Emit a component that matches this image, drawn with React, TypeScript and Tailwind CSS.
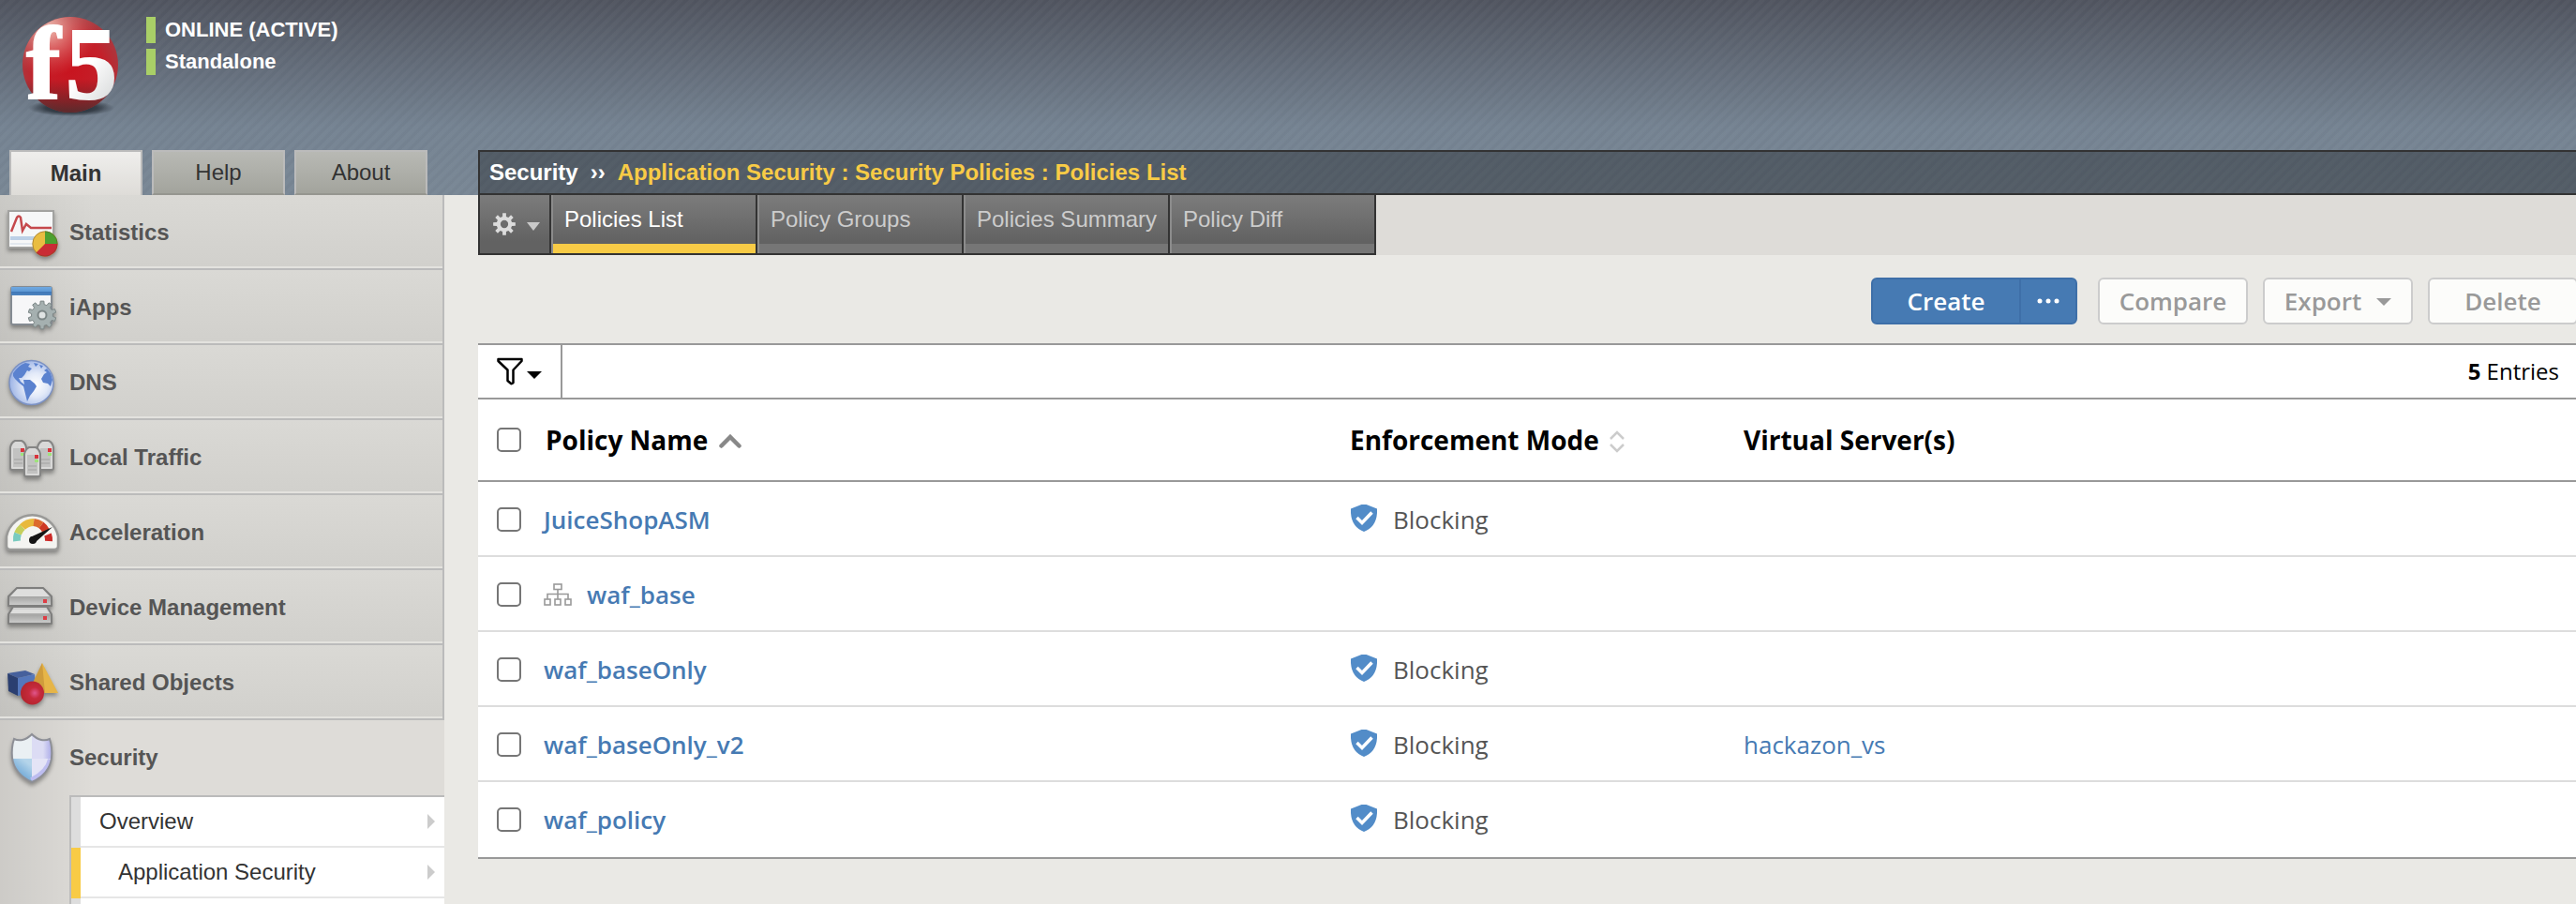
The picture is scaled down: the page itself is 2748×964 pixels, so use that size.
import React from "react";

const OPEN = "font-['Open_Sans','Noto_Sans',sans-serif]";

function Logo() {
  return (
    <svg width="120" height="140" viewBox="20 0 120 140" role="img" aria-label="f5">
      <defs>
        <radialGradient id="ball" cx="0.5" cy="0.55" r="0.55">
          <stop offset="0" stopColor="#c8141f" />
          <stop offset="0.65" stopColor="#c4202a" />
          <stop offset="1" stopColor="#a83a40" />
        </radialGradient>
        <radialGradient id="shine" cx="0.28" cy="0.12" r="0.5">
          <stop offset="0" stopColor="#f3c4b8" stopOpacity="0.95" />
          <stop offset="1" stopColor="#e06060" stopOpacity="0" />
        </radialGradient>
        <linearGradient id="dark" x1="0" y1="0" x2="0" y2="1">
          <stop offset="0.65" stopColor="#402020" stopOpacity="0" />
          <stop offset="1" stopColor="#3c2a2a" stopOpacity="0.75" />
        </linearGradient>
        <radialGradient id="ground">
          <stop offset="0" stopColor="#1c232b" stopOpacity="0.95" />
          <stop offset="0.6" stopColor="#1c232b" stopOpacity="0.7" />
          <stop offset="1" stopColor="#1c232b" stopOpacity="0" />
        </radialGradient>
        <linearGradient id="letters" x1="0" y1="0" x2="1" y2="1">
          <stop offset="0.6" stopColor="#ffffff" />
          <stop offset="1" stopColor="#c9cccd" />
        </linearGradient>
      </defs>
      <ellipse cx="76" cy="115" rx="46" ry="9" fill="url(#ground)" />
      <circle cx="75" cy="69" r="51" fill="url(#ball)" />
      <circle cx="75" cy="69" r="51" fill="url(#shine)" />
      <circle cx="75" cy="69" r="51" fill="url(#dark)" />
      <text
        x="28 70"
        y="105"
        fontSize="110"
        fontWeight="700"
        fill="url(#letters)"
        stroke="url(#letters)"
        strokeWidth="2"
        className="font-['Liberation_Serif',serif]"
      >
        f5
      </text>
    </svg>
  );
}

const shadow = "drop-shadow-[0_3px_2px_rgba(0,0,0,0.35)]";

function StatisticsIcon() {
  return (
    <svg width="64" height="60" viewBox="0 0 64 60" className={shadow} aria-hidden="true">
      <rect x="9" y="7" width="48" height="39" fill="#f6f7f8" stroke="#a2a2a0" strokeWidth="2" />
      <rect x="11" y="34" width="32" height="4" fill="#bcd0e6" />
      <rect x="11" y="41" width="32" height="2" fill="#e2e8ef" />
      <path d="M12 29 L18 14 Q20 11 22 14 L24 28 L28 21 L33 25 L55 25" fill="none" stroke="#c5494d" strokeWidth="2.5" />
      <circle cx="48" cy="42" r="13.5" fill="#e9bd42" />
      <path d="M48 42 V28.5 A13.5 13.5 0 0 1 61.500 42 Z" fill="#4da030" />
      <path d="M48 42 H61.500 A13.5 13.5 0 0 1 38.500 51.500 Z" fill="#c92c35" />
      <circle cx="48" cy="42" r="13.200" fill="none" stroke="#6b4a2a" strokeOpacity="0.45" />
    </svg>
  );
}

function gearPath(cx: number, cy: number, outer: number, inner: number, teeth: number) {
  const pts: string[] = [];
  const step = (Math.PI * 2) / teeth;
  for (let i = 0; i < teeth; i++) {
    const a = i * step - Math.PI / 2;
    const corners: [number, number][] = [
      [a - step * 0.3, inner],
      [a - step * 0.2, outer],
      [a + step * 0.2, outer],
      [a + step * 0.3, inner],
    ];
    corners.forEach(([t, r]) => pts.push(`${(cx + r * Math.cos(t)).toFixed(2)} ${(cy + r * Math.sin(t)).toFixed(2)}`));
  }
  return `M${pts.join(" L")} Z`;
}

function AppsIcon() {
  return (
    <svg width="64" height="60" viewBox="0 0 64 60" className={shadow} aria-hidden="true">
      <defs>
        <linearGradient id="bar" x1="0" y1="0" x2="0" y2="1">
          <stop offset="0" stopColor="#6fa8e0" />
          <stop offset="0.5" stopColor="#5f9ad6" />
          <stop offset="0.55" stopColor="#3f76b6" />
          <stop offset="1" stopColor="#4d84c0" />
        </linearGradient>
      </defs>
      <rect x="12" y="8" width="43" height="40" rx="2" fill="#f7f7f8" stroke="#858b92" strokeWidth="2" />
      <rect x="12" y="8" width="43" height="9" fill="url(#bar)" />
      <path d={gearPath(45, 38, 15, 11.5, 10)} fill="#a5b0b0" stroke="#7c8686" />
      <circle cx="45" cy="38" r="4.500" fill="#dfe3e3" stroke="#7c8686" strokeWidth="2" />
    </svg>
  );
}

function GlobeIcon() {
  return (
    <svg width="64" height="60" viewBox="0 0 64 60" className={shadow} aria-hidden="true">
      <defs>
        <radialGradient id="sea" cx="0.6" cy="0.55" r="0.6">
          <stop offset="0" stopColor="#ffffff" />
          <stop offset="0.45" stopColor="#e2e9f8" />
          <stop offset="1" stopColor="#9db4e6" />
        </radialGradient>
      </defs>
      <g transform="translate(0 1)">
        <circle cx="33.500" cy="29" r="23.500" fill="url(#sea)" stroke="#7c92c4" strokeWidth="1.500" />
        <path
          d="M14 19 Q19 11 27 8 L32 9 L30 12 L34 14 L31 17 L29 16 L26 21 L23 24 L20 24 L22 28 L26 31 L25 26 L32 26 L37 30 L39 33 L36 38 L32 43 L29 49 L28 45 L26 37 L25 33 L20 29 L16 25 L14 22 Z"
          fill="#5b82cf"
        />
        <path d="M36 8 L41 9 L38 12 Z M50 14 L54 19 L56 26 L54 33 L51 30 L46 29 L44 25 L47 20 L50 18 L47 16 Z M42 10 L46 11 L44 14 Z" fill="#5b82cf" />
      </g>
    </svg>
  );
}

function Tower({ x, y }: { x: number; y: number }) {
  return (
    <g>
      <path
        d={`M${x} ${y + 7} Q${x + 1} ${y + 2} ${x + 5} ${y} H${x + 12} Q${x + 16} ${y + 2} ${x + 17} ${y + 7} V${y + 29} Q${x + 17} ${y + 31} ${x + 15} ${y + 31} H${x + 2} Q${x} ${y + 31} ${x} ${y + 29} Z`}
        fill="#d9d9d8"
        stroke="#858584"
        strokeWidth="2"
        strokeLinejoin="round"
      />
      <path d={`M${x + 3} ${y + 8} H${x + 14} V${y + 28} H${x + 3} Z`} fill="#c2c2c1" />
      <path d={`M${x + 4} ${y + 20} H${x + 13} M${x + 4} ${y + 24} H${x + 13}`} stroke="#a2a2a1" />
      <rect x={x + 11} y={y + 8} width="4" height="4" fill="#d8343c" />
      <rect x={x + 11} y={y + 13} width="4" height="3" fill="#9fe37c" />
    </g>
  );
}

function TrafficIcon() {
  return (
    <svg width="64" height="60" viewBox="0 0 64 60" className={shadow} aria-hidden="true">
      <Tower x={11} y={12} />
      <Tower x={40} y={12} />
      <Tower x={26} y={19} />
    </svg>
  );
}

function GaugeIcon() {
  return (
    <svg width="64" height="60" viewBox="0 0 64 60" className={shadow} aria-hidden="true">
      <path d="M7 44 V34 A28 28 0 0 1 62 34 V44 Q62 48 58 48 H11 Q7 48 7 44 Z" fill="#f4f4f1" stroke="#999997" strokeWidth="2.500" />
      <g fill="none" strokeWidth="8">
        <path d="M18 39 A17 17 0 0 1 19 31" stroke="#79cbbf" />
        <path d="M19 31 A17 17 0 0 1 24 24" stroke="#c5cf5c" />
        <path d="M24 24 A17 17 0 0 1 36 19" stroke="#e8b93c" />
        <path d="M36 19 A17 17 0 0 1 44 22" stroke="#dc6a2c" />
        <path d="M44 22 A17 17 0 0 1 49 28" stroke="#cf3a24" />
        <path d="M51 32 A17 17 0 0 1 52 39" stroke="#cc2a28" />
      </g>
      <path d="M32 35 L56 24 L38 40 Z" fill="#151515" />
      <circle cx="35" cy="38" r="4" fill="#151515" />
    </svg>
  );
}

function DeviceIcon() {
  return (
    <svg width="64" height="60" viewBox="0 0 64 60" className={shadow} aria-hidden="true">
      <defs>
        <linearGradient id="slab" x1="0" y1="0" x2="0" y2="1">
          <stop offset="0" stopColor="#dcdcdb" />
          <stop offset="0.5" stopColor="#a6a6a5" />
          <stop offset="1" stopColor="#cfcfce" />
        </linearGradient>
      </defs>
      <g stroke="#7f7f7e" strokeWidth="2" strokeLinejoin="round">
        <path d="M9 37 L14 29 H50 L55 37 V47 H9 Z" fill="url(#slab)" />
        <path d="M9 18 L18 9 H46 L55 18 V28 H9 Z" fill="url(#slab)" />
      </g>
      <path d="M11 18 H53 L46 11 H18 Z M11 36 H53 L50 32 H14 Z" fill="#dededd" />
      <rect x="46" y="21" width="4" height="4" fill="#dd3d45" />
      <rect x="46" y="39" width="4" height="4" fill="#dd3d45" />
    </svg>
  );
}

function ShapesIcon() {
  return (
    <svg width="64" height="60" viewBox="0 0 64 60" className={shadow} aria-hidden="true">
      <defs>
        <radialGradient id="redball" cx="0.6" cy="0.5" r="0.6">
          <stop offset="0" stopColor="#e0568c" />
          <stop offset="0.4" stopColor="#c52a3c" />
          <stop offset="1" stopColor="#b3242c" />
        </radialGradient>
      </defs>
      <g transform="translate(0 8)">
        <path d="M8 12 L27 9 L37 13 L19 17 Z" fill="#46609c" />
        <path d="M8 12 L19 17 V36 L9 31 Z" fill="#2b3f70" />
        <path d="M19 17 L37 13 V32 L19 36 Z" fill="#5577bb" />
        <path d="M45 1 L34 33 H62 Z" fill="#e6b548" />
        <path d="M45 1 L34 24 V33 H48 Z" fill="#cf9c3c" />
        <circle cx="34.500" cy="33" r="12.500" fill="url(#redball)" />
      </g>
    </svg>
  );
}

function ShieldIcon() {
  const d = "M34 5 Q39 10 44 11 Q49 12 53 10 Q56 19 55 30 Q53 47 34 56 Q15 47 13 30 Q12 19 15 10 Q19 12 24 11 Q29 10 34 5 Z";
  return (
    <svg width="64" height="60" viewBox="0 0 64 60" className={shadow} aria-hidden="true">
      <defs>
        <clipPath id="shieldclip">
          <path d={d} />
        </clipPath>
        <linearGradient id="q1" x1="0" y1="0" x2="1" y2="0">
          <stop offset="0.5" stopColor="#dcdcf4" />
          <stop offset="1" stopColor="#9c9ce4" />
        </linearGradient>
        <linearGradient id="q2" x1="1" y1="0" x2="0.3" y2="1">
          <stop offset="0.2" stopColor="#b4d4ea" />
          <stop offset="1" stopColor="#4a90cc" />
        </linearGradient>
      </defs>
      <g clipPath="url(#shieldclip)">
        <rect x="10" y="2" width="24" height="29" fill="#eaf0f3" />
        <rect x="34" y="2" width="24" height="29" fill="url(#q1)" />
        <rect x="10" y="31" width="24" height="27" fill="url(#q2)" />
        <rect x="34" y="31" width="24" height="27" fill="#e4e4f6" />
        <path d="M55 32 Q52 46 34 55" fill="none" stroke="#bdbdf0" strokeWidth="8" />
      </g>
      <path d={d} fill="none" stroke="#8d8f96" strokeWidth="2" />
    </svg>
  );
}

const NAV: { label: string; Icon: () => React.JSX.Element }[] = [
  { label: "Statistics", Icon: StatisticsIcon },
  { label: "iApps", Icon: AppsIcon },
  { label: "DNS", Icon: GlobeIcon },
  { label: "Local Traffic", Icon: TrafficIcon },
  { label: "Acceleration", Icon: GaugeIcon },
  { label: "Device Management", Icon: DeviceIcon },
  { label: "Shared Objects", Icon: ShapesIcon },
];

function Caret({ className, w, h }: { className: string; w: number; h: number }) {
  return (
    <svg width={w} height={h} viewBox="0 0 10 6" preserveAspectRatio="none" className={className} aria-hidden="true">
      <path d="M0 0 H10 L5 6 Z" fill="currentColor" />
    </svg>
  );
}

function SubArrow() {
  return (
    <svg width="8" height="16" viewBox="0 0 8 16" className="text-[#cccccc]" aria-hidden="true">
      <path d="M0 0 L8 8 L0 16 Z" fill="currentColor" />
    </svg>
  );
}

function Sidebar() {
  return (
    <nav className="w-[474px] shrink-0 bg-[#dedcd8] bg-[linear-gradient(90deg,rgba(0,0,0,0.08),rgba(0,0,0,0)_100px)]">
      <ul>
        {NAV.map(({ label, Icon }) => (
          <li
            key={label}
            className="border-b-2 border-r-2 border-[#bbbbbb] bg-[linear-gradient(90deg,rgba(0,0,0,0.07),rgba(0,0,0,0)_100px),linear-gradient(180deg,#dad9d5,#d1d0cc)]"
          >
            <a href="#" className="flex h-[78px] items-center gap-[10px] border-b-2 border-[#e3e2de] pt-1 text-2xl font-bold text-[#555555]">
              <Icon />
              {label}
            </a>
          </li>
        ))}
      </ul>
      <a href="#" className="flex h-20 items-center gap-[10px] text-2xl font-bold text-[#555555]">
        <ShieldIcon />
        Security
      </a>
      <ul className="ml-[74px] border-l-2 border-t-2 border-[#bbbbbb] bg-white text-2xl text-[#333333]">
        <li className="border-l-10 border-[#dddddd]">
          <a href="#" className="flex h-[54px] items-center justify-between border-b-2 border-[#e6e6e6] pl-5 pr-[10px]">
            Overview
            <SubArrow />
          </a>
        </li>
        <li className="border-l-10 border-[#f8cb46]">
          <a href="#" className="flex h-[54px] items-center justify-between border-b-2 border-[#e6e6e6] pl-10 pr-[10px]">
            Application Security
            <SubArrow />
          </a>
        </li>
        <li className="h-[6px] border-l-10 border-[#dddddd]" />
      </ul>
    </nav>
  );
}

function Header() {
  return (
    <header className="flex flex-1 flex-col justify-between">
      <div className="flex pl-5">
        <Logo />
        <div className="ml-4 mt-[18px] flex flex-col gap-[6px] text-[22px] font-bold leading-7 text-white">
          <div className="border-l-10 border-[#a9cf67] pl-[10px]">ONLINE (ACTIVE)</div>
          <div className="border-l-10 border-[#a9cf67] pl-[10px]">Standalone</div>
        </div>
      </div>
      <div className="flex gap-[10px] pl-[10px] text-2xl text-[#333333]">
        <button className="h-12 w-[142px] border-2 border-b-0 border-[#bbbbbb] bg-[linear-gradient(180deg,#efeeec,#dedcd8)] font-bold">
          Main
        </button>
        <button className="h-12 w-[142px] border-2 border-b-[#969690] border-[#bbbbbb] bg-[linear-gradient(180deg,#b8b9b4,#a3a49d)]">
          Help
        </button>
        <button className="h-12 w-[142px] border-2 border-b-[#969690] border-[#bbbbbb] bg-[linear-gradient(180deg,#b8b9b4,#a3a49d)]">
          About
        </button>
      </div>
    </header>
  );
}

const TABS = ["Policies List", "Policy Groups", "Policies Summary", "Policy Diff"];

function TabBar() {
  return (
    <div className="flex h-16 bg-[#dedcd8]">
      <div className="flex border-b-2 border-l-2 border-[#333333]">
        <button
          aria-label="Options"
          className="flex w-[76px] items-center border-r-2 border-[#333333] bg-[linear-gradient(180deg,#7c7c7c,#626262_80%)] pl-[14px] text-[#c9c9c9]"
        >
          <svg width="24" height="24" viewBox="1 1 26 26" aria-hidden="true">
            <path
              fillRule="evenodd"
              d={gearPath(14, 14, 13, 9, 8) + " M9.500 14 a4.500 4.500 0 1 0 9 0 a4.500 4.500 0 1 0 -9 0 Z"}
              fill="#dcdcdc"
            />
          </svg>
          <Caret w={14} h={9} className="ml-3 mt-1" />
        </button>
        {TABS.map((t, i) => (
          <a
            key={t}
            href="#"
            className={
              "w-[220px] border-l-2 border-r-2 border-l-[#8c8c8c] border-r-[#333333] bg-[linear-gradient(180deg,#7c7c7c,#626262_80%)] text-2xl " +
              (i === 0 ? "text-white" : "text-[#cccccc]")
            }
          >
            <span
              className={
                "flex h-full items-center whitespace-nowrap border-b-10 pl-3 " +
                (i === 0 ? "border-[#f8cb46]" : "border-[#767676]")
              }
            >
              {t}
            </span>
          </a>
        ))}
      </div>
    </div>
  );
}

const GHOST = "h-[50px] w-40 shrink-0 rounded-md border-2 border-[#cccccc] bg-[#fcfcfa] text-[26px] leading-none font-semibold text-[#999999]";

function Actions() {
  return (
    <div className="-mr-[2px] flex justify-end gap-4 pb-5 pt-6">
      <div className="mr-[6px] flex h-[50px] rounded-md border-2 border-[#3e6fa8] bg-[#467ab3] text-[26px] leading-none font-semibold text-white">
        <button className="w-[156px]">Create</button>
        <button aria-label="More" className="flex w-[60px] items-center justify-center border-l-2 border-[#3e6fa8]">
          <svg width="24" height="6" viewBox="0 0 24 6" aria-hidden="true">
            <circle cx="3" cy="3" r="2.500" fill="currentColor" />
            <circle cx="12" cy="3" r="2.500" fill="currentColor" />
            <circle cx="21" cy="3" r="2.500" fill="currentColor" />
          </svg>
        </button>
      </div>
      <button className={GHOST}>Compare</button>
      <button className={GHOST + " flex items-center justify-center gap-4"}>
        Export
        <Caret w={16} h={8} className="mt-[2px]" />
      </button>
      <button className={GHOST}>Delete</button>
    </div>
  );
}

type Policy = { name: string; parent?: boolean; mode?: string; server?: string };

const POLICIES: Policy[] = [
  { name: "JuiceShopASM", mode: "Blocking" },
  { name: "waf_base", parent: true },
  { name: "waf_baseOnly", mode: "Blocking" },
  { name: "waf_baseOnly_v2", mode: "Blocking", server: "hackazon_vs" },
  { name: "waf_policy", mode: "Blocking" },
];

function Check({ label }: { label: string }) {
  return (
    <input
      type="checkbox"
      aria-label={label}
      className="ml-5 block size-[26px] appearance-none rounded-[5px] border-2 border-[#767676] bg-white checked:bg-[#467ab3]"
    />
  );
}

function TreeIcon() {
  return (
    <svg width="30" height="24" viewBox="0 0 30 24" fill="none" stroke="#999999" strokeWidth="1.600" aria-hidden="true">
      <rect x="11" y="1" width="8" height="5.500" />
      <rect x="1" y="17" width="6" height="6" />
      <rect x="12" y="17" width="6" height="6" />
      <rect x="23" y="17" width="6" height="6" />
      <path d="M15 6.500 V17 M4 17 V11.500 H26 V17" />
    </svg>
  );
}

function ModeShield() {
  return (
    <svg width="30" height="32" viewBox="-1 1 30 32" aria-hidden="true">
      <path d="M14 0 L28 5.500 V10 Q27 25 14 30 Q1 25 0 10 V5.500 Z" fill="#528cc8" />
      <path d="M6.500 15 L12 20.500 L22.500 9.500" fill="none" stroke="#ffffff" strokeWidth="3.500" />
    </svg>
  );
}

function PolicyTable() {
  return (
    <table className="w-full table-fixed border-separate border-spacing-0 bg-white text-left">
      <colgroup>
        <col className="w-[70px]" />
        <col className="w-[860px]" />
        <col className="w-[420px]" />
        <col />
      </colgroup>
      <thead>
        <tr className="h-22 text-[28px] font-bold text-black [&>th]:border-b-2 [&>th]:border-[#999999]">
          <th>
            <Check label="Select all policies" />
          </th>
          <th>
            <button className="flex items-center gap-3 pl-[2px]">
              Policy Name
              <svg width="24" height="16" viewBox="0 0 24 16" className="mt-1" aria-hidden="true">
                <path d="M2.500 12.500 L12 3 L21.500 12.500" fill="none" stroke="#888888" strokeWidth="4.500" strokeLinecap="round" />
              </svg>
            </button>
          </th>
          <th>
            <button className="flex items-center gap-[10px]">
              Enforcement Mode
              <svg width="18" height="24" viewBox="0 0 18 24" className="mt-1" aria-hidden="true">
                <path d="M2 9 L9 2 L16 9 M2 15 L9 22 L16 15" fill="none" stroke="#cccccc" strokeWidth="2.500" />
              </svg>
            </button>
          </th>
          <th>Virtual Server(s)</th>
        </tr>
      </thead>
      <tbody className="[&>tr:last-child>td]:border-[#999999]">
        {POLICIES.map((p) => (
          <tr key={p.name} className="h-20 text-[26px] last:h-[82px] [&>td]:border-b-2 [&>td]:border-[#dddddd] [&:not(:last-child)>td]:pt-[2px]">
            <td>
              <Check label={"Select " + p.name} />
            </td>
            <td>
              <a href="#" className="flex items-center gap-4 font-semibold text-[#467ab3]">
                {p.parent && <TreeIcon />}
                {p.name}
              </a>
            </td>
            <td>
              {p.mode && (
                <span className="flex items-center gap-4 text-[#555555]">
                  <ModeShield />
                  {p.mode}
                </span>
              )}
            </td>
            <td>
              {p.server && (
                <a href="#" className="text-[#467ab3]">
                  {p.server}
                </a>
              )}
            </td>
          </tr>
        ))}
      </tbody>
    </table>
  );
}

export default function App() {
  return (
    <div className="flex min-h-screen flex-col overflow-hidden bg-[#eae9e5] font-['Liberation_Sans',Arial,sans-serif]">
      <div className="flex h-52 bg-[repeating-linear-gradient(135deg,rgba(255,255,255,0.025)_0px,rgba(255,255,255,0.025)_3px,rgba(0,0,0,0.01)_5px,rgba(0,0,0,0.01)_7px,rgba(255,255,255,0.025)_8px),linear-gradient(180deg,#50545f,#748291_65%,#788694)]">
        <div className="flex w-[474px] shrink-0">
          <Header />
        </div>
        <div className="ml-9 flex flex-1 items-end">
          <div className="flex h-12 flex-1 items-center gap-[13px] border-2 border-r-0 border-[#333333] bg-black/30 pl-[10px] text-2xl font-bold">
            <span className="text-white">Security</span>
            <span className="text-white">››</span>
            <a href="#" className="text-[#f8cb46]">
              Application Security : Security Policies : Policies List
            </a>
          </div>
        </div>
      </div>
      <div className="flex flex-1">
        <Sidebar />
        <main className="ml-9 min-w-0 flex-1">
          <TabBar />
          <div className={OPEN}>
            <Actions />
            <div className="flex h-[60px] items-stretch justify-between border-y-2 border-[#999999] bg-white text-2xl text-black">
              <button aria-label="Filter" className="flex w-[90px] items-center border-r-2 border-[#999999] pl-5">
                <svg width="28" height="30" viewBox="0 0 28 30" aria-hidden="true">
                  <path
                    d="M1.500 2 H26.500 V4 L17.500 13.500 V27 Q16 29 14.500 27.500 L11.500 25 V13.500 L1.500 4 Z"
                    fill="none"
                    stroke="#000000"
                    strokeWidth="2.500"
                    strokeLinejoin="round"
                  />
                </svg>
                <Caret w={16} h={8} className="ml-1 mt-2" />
              </button>
              <p className="self-center pr-[18px]">
                <b>5</b> Entries
              </p>
            </div>
            <PolicyTable />
          </div>
        </main>
      </div>
    </div>
  );
}
